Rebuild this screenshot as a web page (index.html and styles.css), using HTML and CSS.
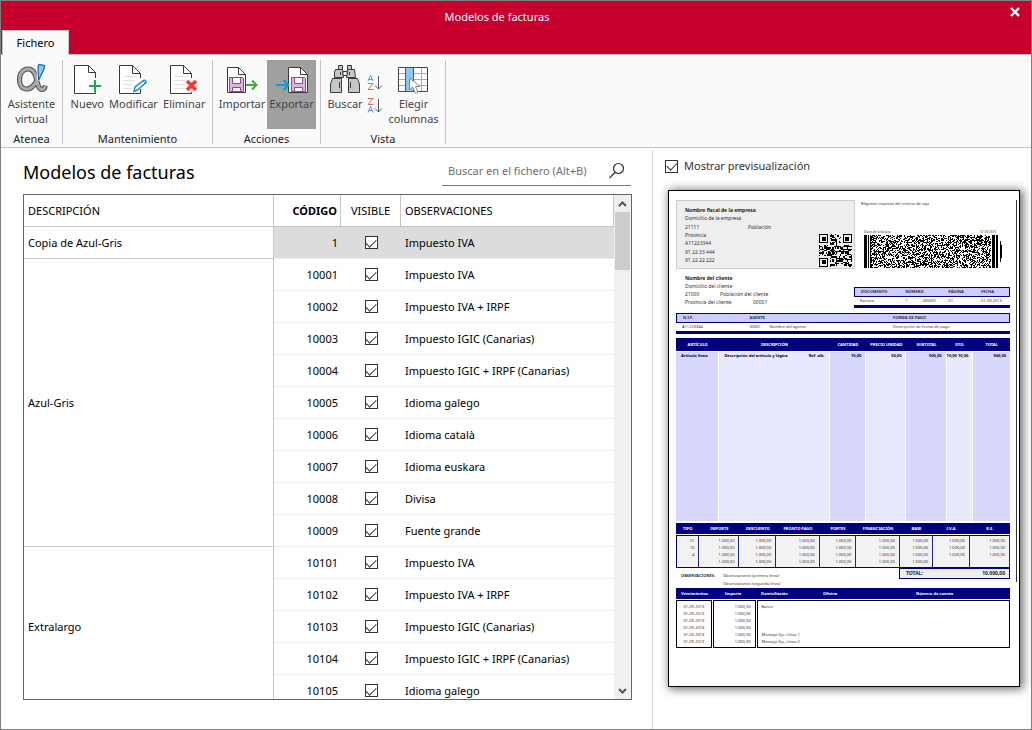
FILE: index.html
```html
<!DOCTYPE html>
<html lang="es">
<head>
<meta charset="utf-8">
<title>Modelos de facturas</title>
<link rel="stylesheet" href="styles.css">
</head>
<body>
<div class="window">
  <header class="titlebar">
    <div class="title">Modelos de facturas</div>
    <button class="close" aria-label="Cerrar"><svg width="10" height="10" viewBox="0 0 10 10"><path d="M1 1L9 9M9 1L1 9" stroke="#fff" stroke-width="2.4"/></svg></button>
    <button class="tab">Fichero</button>
  </header>

  <nav class="ribbon">
    <section class="group g-atenea">
      <div class="tools">
        <button class="tool"><svg width="32" height="32" viewBox="0 0 32 32"><path d="M25 5C22 15 19 26 10.500 26C6 26 3.500 22 3.500 16.500C3.500 10.500 7 6 12 6C19 6 20 14 21.500 20C22.500 24.500 24 26.500 26 26.500C28 26.500 28.800 25 29.200 22.500" fill="none" stroke="#555" stroke-width="5.200"/><path d="M24.500 6C22 15 19 26 10.500 26C6 26 3.500 22 3.500 16.500C3.500 10.500 7 6 12 6C19 6 20 14 21.500 20C22.500 24.500 24 26.500 26 26.500C28 26.500 28.800 25 29.200 23" fill="none" stroke="#aaa" stroke-width="3"/><path d="M22 3.500L23 1.500L28.500 2.500L28 6L22.500 17.500Z" fill="#8fc6ee" stroke="#fafafa" stroke-width="3"/><path d="M22 3.500L23 1.500L28.500 2.500L28 6L22.500 17.500Z" fill="#8fc6ee" stroke="#1467ad" stroke-width="1.200"/></svg><span>Asistente<br>virtual</span></button>
      </div>
      <h2>Atenea</h2>
    </section>
    <section class="group g-mant">
      <div class="tools">
        <button class="tool"><svg width="32" height="32" viewBox="0 0 32 32"><path d="M24.500 16V9.500L17.500 2.500H3.500V30.500H24.500V30" fill="#fff"/><path d="M24.500 15V9.500L17.500 2.500H3.500V30.500H24.500V28.500M17.500 2.500V9.500H24.500" fill="none" stroke="#3a3a3a"/><path d="M24 17V29M18 23H30" stroke="#1aab4f" stroke-width="2"/></svg><span>Nuevo</span></button>
        <button class="tool"><svg width="32" height="32" viewBox="0 0 32 32"><path d="M23.500 16V9.500L15.500 2.500H2.500V30.500H23.500" fill="#fff"/><path d="M6 13.500H20M6 17.500H18M6 21.500H16M6 25.500H15" stroke="#e2e2e2"/><path d="M23.500 15V10.500L15.500 2.500H2.500V30.500H23.500V26M15.500 2.500V10.500H23.500" fill="none" stroke="#3a3a3a"/><path d="M17 28.500L18 24L26.500 17.500Q29 16.500 29 19.500L20.500 27Z" fill="#fff" stroke="#2a8bc8" stroke-width="1.500"/><path d="M26 18L28.500 20.500" stroke="#2a8bc8"/></svg><span>Modificar</span></button>
        <button class="tool"><svg width="32" height="32" viewBox="0 0 32 32"><path d="M23.500 16V9.500L15.500 2.500H2.500V30.500H23.500" fill="#fff"/><path d="M6 13.500H20M6 17.500H18M6 21.500H17M6 25.500H17" stroke="#e2e2e2"/><path d="M23.500 15V10.500L15.500 2.500H2.500V30.500H23.500V29M15.500 2.500V10.500H23.500" fill="none" stroke="#3a3a3a"/><path d="M19 18L28 27M28 18L19 27" stroke="#ee3a38" stroke-width="3.400"/></svg><span>Eliminar</span></button>
      </div>
      <h2>Mantenimiento</h2>
    </section>
    <section class="group g-acc">
      <div class="tools">
        <button class="tool"><svg width="32" height="32" viewBox="0 0 32 32"><path d="M19.500 29.500H1.500V4.500H12.500L19.500 11.500Z" fill="#fff" stroke="#3a3a3a"/><path d="M12.500 4.500V11.500H19.500" fill="none" stroke="#3a3a3a"/><path d="M3.500 14.500H16.500L17.500 15.500V28.500H3.500Z" fill="#dcb4dc" stroke="#9a449c"/><path d="M6.500 14.500H14.500V20.500H6.500ZM6.500 24.500H14.500V28.500H6.500Z" fill="#fff" stroke="#9a449c"/><path d="M20 22H30M26 17.500L30.500 22L26 26.500" fill="none" stroke="#45a92c" stroke-width="2"/></svg><span>Importar</span></button>
        <button class="tool active"><svg width="32" height="32" viewBox="0 0 32 32"><path d="M31.500 29.500H12.500V4.500H24.500L31.500 11.500Z" fill="#fff" stroke="#3a3a3a"/><path d="M24.500 4.500V11.500H31.500" fill="none" stroke="#3a3a3a"/><path d="M15.500 14.500H28.500L29.500 15.500V28.500H15.500Z" fill="#dcb4dc" stroke="#9a449c"/><path d="M18.500 14.500H26.500V20.500H18.500ZM18.500 24.500H26.500V28.500H18.500Z" fill="#fff" stroke="#9a449c"/><path d="M0 22H12M7.500 17L12.500 22L7.500 27" fill="none" stroke="#0b98dc" stroke-width="2"/></svg><span>Exportar</span></button>
      </div>
      <h2>Acciones</h2>
    </section>
    <section class="group g-vista">
      <div class="tools">
        <button class="tool"><svg width="32" height="32" viewBox="0 0 32 32"><g fill="#c6c6c4" stroke="#3a3a3a"><path d="M9.500 2.500H13.500V6.500H9.500ZM18.500 2.500H22.500V6.500H18.500Z"/><path d="M6.500 6.500H13.500L14.500 14.500H5.500V9ZM18.500 6.500H25.500L26.500 14.500H17.500Z"/><path d="M14 8.500H18V12.500H14Z" fill="#fff"/><path d="M3.500 15.500H12.500V29.500H1.500V21ZM19.500 15.500H28.500L30.500 21V29.500H19.500Z"/></g><path d="M10.500 19V25M21.500 19V25M11.500 9V12M20.500 9V12" stroke="#3a3a3a"/></svg><span>Buscar</span></button>
        <div class="sorts">
          <button aria-label="Orden ascendente"><svg width="16" height="18" viewBox="0 0 16 18"><path d="M1 7L3.500 1.500L6 7M2 5.500H5" fill="none" stroke="#3d9bdc"/><path d="M1 9.500H6L1 15.500H6.500" fill="none" stroke="#e66767"/><path d="M11.500 2V15M8 11.500L11.500 15L15 11.500" fill="none" stroke="#555"/></svg></button>
          <button aria-label="Orden descendente"><svg width="16" height="18" viewBox="0 0 16 18"><path d="M1 1.500H6L1 7.500H6.500" fill="none" stroke="#e66767"/><path d="M1 15.500L3.500 9.500L6 15.500M2 13.500H5" fill="none" stroke="#3d9bdc"/><path d="M11.500 2V15M8 11.500L11.500 15L15 11.500" fill="none" stroke="#555"/></svg></button>
        </div>
        <button class="tool"><svg width="32" height="32" viewBox="0 0 32 32"><path d="M.5 4.500H29.500V28.500H.5Z" fill="#fff"/><path d="M0 10.500H30M0 16.500H30M0 22.500H30M23.500 4V28" stroke="#aaa"/><path d="M.5 4.500H29.500V28.500H.5Z" fill="none" stroke="#444"/><path d="M7.500 4.500H15.500V28.500H7.500Z" fill="#8fc6ee" stroke="#1467ad"/><path d="M11.500 15V27L14.500 24L17.500 30.500L20 29L17.500 23.500H22Z" fill="#fff" stroke="#888"/></svg><span>Elegir<br>columnas</span></button>
      </div>
      <h2>Vista</h2>
    </section>
  </nav>

  <main class="content">
    <section class="left">
      <div class="heading">
        <h1>Modelos de facturas</h1>
        <label class="search"><input type="text" placeholder="Buscar en el fichero (Alt+B)" aria-label="Buscar en el fichero"><svg width="18" height="18" viewBox="0 0 18 18"><circle cx="10.500" cy="6.500" r="5" fill="none" stroke="#333" stroke-width="1.200"/><path d="M7 10.500L1.500 16" stroke="#333" stroke-width="1.300"/></svg></label>
      </div>
      <div class="listbox">
        <div class="rows">
        <table class="list">
          <colgroup><col class="c-desc"><col class="c-cod"><col class="c-vis"><col></colgroup>
          <thead><tr><th>DESCRIPCIÓN</th><th class="num">CÓDIGO</th><th class="mid">VISIBLE</th><th>OBSERVACIONES</th></tr></thead>
          <tbody>
            <tr class="sel"><td class="desc">Copia de Azul-Gris</td><td class="num">1</td><td class="mid"><input type="checkbox" checked aria-label="Visible 1"></td><td>Impuesto IVA</td></tr>
            <tr><td class="desc" rowspan="9">Azul-Gris</td><td class="num">10001</td><td class="mid"><input type="checkbox" checked aria-label="Visible 10001"></td><td>Impuesto IVA</td></tr>
            <tr><td class="num">10002</td><td class="mid"><input type="checkbox" checked aria-label="Visible 10002"></td><td>Impuesto IVA + IRPF</td></tr>
            <tr><td class="num">10003</td><td class="mid"><input type="checkbox" checked aria-label="Visible 10003"></td><td>Impuesto IGIC (Canarias)</td></tr>
            <tr><td class="num">10004</td><td class="mid"><input type="checkbox" checked aria-label="Visible 10004"></td><td>Impuesto IGIC + IRPF (Canarias)</td></tr>
            <tr><td class="num">10005</td><td class="mid"><input type="checkbox" checked aria-label="Visible 10005"></td><td>Idioma galego</td></tr>
            <tr><td class="num">10006</td><td class="mid"><input type="checkbox" checked aria-label="Visible 10006"></td><td>Idioma català</td></tr>
            <tr><td class="num">10007</td><td class="mid"><input type="checkbox" checked aria-label="Visible 10007"></td><td>Idioma euskara</td></tr>
            <tr><td class="num">10008</td><td class="mid"><input type="checkbox" checked aria-label="Visible 10008"></td><td>Divisa</td></tr>
            <tr><td class="num">10009</td><td class="mid"><input type="checkbox" checked aria-label="Visible 10009"></td><td>Fuente grande</td></tr>
            <tr><td class="desc" rowspan="5">Extralargo</td><td class="num">10101</td><td class="mid"><input type="checkbox" checked aria-label="Visible 10101"></td><td>Impuesto IVA</td></tr>
            <tr><td class="num">10102</td><td class="mid"><input type="checkbox" checked aria-label="Visible 10102"></td><td>Impuesto IVA + IRPF</td></tr>
            <tr><td class="num">10103</td><td class="mid"><input type="checkbox" checked aria-label="Visible 10103"></td><td>Impuesto IGIC (Canarias)</td></tr>
            <tr><td class="num">10104</td><td class="mid"><input type="checkbox" checked aria-label="Visible 10104"></td><td>Impuesto IGIC + IRPF (Canarias)</td></tr>
            <tr><td class="num">10105</td><td class="mid"><input type="checkbox" checked aria-label="Visible 10105"></td><td>Idioma galego</td></tr>
          </tbody>
        </table>
        </div>
        <div class="scroll">
          <button aria-label="Subir"><svg width="9" height="6" viewBox="0 0 9 6"><path d="M1 5L4.500 1.500L8 5" fill="none" stroke="#555" stroke-width="2"/></svg></button>
          <div class="thumb"></div>
          <button class="down" aria-label="Bajar"><svg width="9" height="6" viewBox="0 0 9 6"><path d="M1 1L4.500 4.500L8 1" fill="none" stroke="#555" stroke-width="2"/></svg></button>
        </div>
      </div>
    </section>

    <aside class="right">
      <label class="show"><input type="checkbox" checked>Mostrar previsualización</label>
      <article class="sheet">
        <div class="top">
          <div class="parties">
            <div class="company">
              <div class="lines">
                <p><b>Nombre fiscal de la empresa</b></p>
                <p>Domicilio de la empresa</p>
                <p class="pair wide"><span>21111</span><span>Población</span></p>
                <p>Provincia</p>
                <p>A11223344</p>
                <p>91 22 33 444</p>
                <p>91 22 22 222</p>
              </div>
              <svg class="qr" width="33" height="33" viewBox="0 0 25 25" shape-rendering="crispEdges"><path id="qr"/></svg>
            </div>
            <div class="client">
              <p><b>Nombre del cliente</b></p>
              <p>Domicilio del cliente</p>
              <p class="pair"><span>21000</span><span>Población del cliente</span></p>
              <p class="pair prov"><span>Provincia del cliente</span><span>00001</span></p>
            </div>
          </div>
          <div class="codes">
            <p class="regime">Régimen especial del criterio de caja</p>
            <div class="tiny"><span>Datos de la factura</span><span>01-09-2013</span></div>
            <svg class="pdf" width="140" height="33" viewBox="0 0 140 33" shape-rendering="crispEdges"><path id="pdf"/></svg>
            <table class="strip doc">
              <colgroup><col class="d1"><col class="d2"><col class="d3"><col class="d4"><col></colgroup>
              <thead><tr><th>DOCUMENTO</th><th colspan="2">NÚMERO</th><th class="pl">PÁGINA</th><th class="pl">FECHA</th></tr></thead>
              <tbody><tr><td>Factura</td><td>1</td><td>000001</td><td class="pl">01</td><td class="pl">01-09-2013</td></tr></tbody>
            </table>
          </div>
        </div>
        <table class="strip nif">
          <colgroup><col class="n1"><col class="n2"><col class="n3"><col></colgroup>
          <thead><tr><th>N.I.F.</th><th colspan="2">AGENTE</th><th>FORMA DE PAGO</th></tr></thead>
          <tbody><tr><td>A11223344</td><td>00001</td><td>Nombre del agente</td><td>Descripción de forma de pago</td></tr></tbody>
        </table>
        <table class="items">
          <colgroup><col class="i1"><col class="i2"><col class="i3"><col class="i4"><col class="i5"><col class="i6"><col></colgroup>
          <thead><tr><th>ARTÍCULO</th><th>DESCRIPCIÓN</th><th>CANTIDAD</th><th>PRECIO UNIDAD</th><th>SUBTOTAL</th><th>DTO.</th><th>TOTAL</th></tr></thead>
          <tbody><tr><td class="txt">Artículo línea</td><td class="txt"><span class="split"><span>Descripción del artículo y lógica</span><span>Ref. alb.</span></span></td><td>10,00</td><td>50,00</td><td>500,00</td><td>10,00 10,00</td><td>500,00</td></tr></tbody>
        </table>
        <table class="taxes">
          <colgroup><col class="t1"><col class="t2"><col class="t3"><col class="t4"><col class="t3"><col class="t4"><col class="t7"><col class="t3"><col></colgroup>
          <thead><tr><th>TIPO</th><th>IMPORTE</th><th>DESCUENTO</th><th>PRONTO PAGO</th><th>PORTES</th><th>FINANCIACIÓN</th><th>BASE</th><th>I.V.A.</th><th>R.E.</th></tr></thead>
          <tbody>
            <tr><td>21</td><td>1.000,00</td><td>1.000,00</td><td>1.000,00</td><td>1.000,00</td><td>1.000,00</td><td>1.000,00</td><td>1.000,00</td><td>1.000,00</td></tr>
            <tr><td>10</td><td>1.000,00</td><td>1.000,00</td><td>1.000,00</td><td>1.000,00</td><td>1.000,00</td><td>1.000,00</td><td>1.000,00</td><td>1.000,00</td></tr>
            <tr><td>4</td><td>1.000,00</td><td>1.000,00</td><td>1.000,00</td><td>1.000,00</td><td>1.000,00</td><td>1.000,00</td><td>1.000,00</td><td>1.000,00</td></tr>
            <tr><td></td><td>1.000,00</td><td>1.000,00</td><td>1.000,00</td><td>1.000,00</td><td>1.000,00</td><td>1.000,00</td><td></td><td></td></tr>
          </tbody>
        </table>
        <div class="sum">
          <b class="obs-label">OBSERVACIONES:</b>
          <div class="obs"><p>Observaciones (primera línea)</p><p>Observaciones (segunda línea)</p></div>
          <div class="total"><b>TOTAL:</b><b>10.000,00</b></div>
        </div>
        <div class="due-head"><span>Vencimientos</span><span>Importe</span><span>Domiciliación</span><span>Oficina</span><span>Número de cuenta</span></div>
        <div class="due">
          <div class="dates"><p>01-09-2013</p><p>01-09-2013</p><p>01-09-2013</p><p>01-09-2013</p><p>01-09-2013</p><p>01-09-2013</p></div>
          <div class="amounts"><p>1.000,00</p><p>1.000,00</p><p>1.000,00</p><p>1.000,00</p><p>1.000,00</p><p>1.000,00</p></div>
          <div class="bank"><p>Banco</p><div><p>Mensaje fijo. Línea 1</p><p>Mensaje fijo. Línea 2</p></div></div>
        </div>
      </article>
    </aside>
  </main>
</div>
<script src="codes.js"></script>
</body>
</html>
```
FILE: codes.js
```js
// Sample QR and PDF417 codes of the invoice preview.
let seed = 7;
function bit() {
  seed = (seed * 1103515245 + 12345) % 2147483648;
  return seed / 2147483648 > 0.5;
}
function cell(x, y, w, h) {
  return `M${x} ${y}h${w}v${h}h${-w}z`;
}

const finders = [[0, 0], [18, 0], [0, 18]];
let qr = '';
for (let y = 0; y < 25; y++) {
  for (let x = 0; x < 25; x++) {
    const f = finders.find(([a, b]) => x >= a - 1 && x < a + 8 && y >= b - 1 && y < b + 8);
    let on = bit();
    if (f) {
      const d = Math.max(Math.abs(x - f[0] - 3), Math.abs(y - f[1] - 3));
      on = d === 3 || d < 2;
    }
    if (on) qr += cell(x, y, 1, 1);
  }
}
document.getElementById('qr').setAttribute('d', qr);

let pdf = cell(0, 0, 3, 33) + cell(4, 0, 1, 33) + cell(6, 0, 1, 33) +
  cell(128, 0, 3, 33) + cell(132, 0, 2, 33) + cell(136, 6, 1, 21) + cell(137, 10, 1, 13);
for (let y = 0; y < 33; y++) {
  for (let x = 7; x < 127; x++) {
    if (bit()) pdf += cell(x, y, 1, 1);
  }
}
document.getElementById('pdf').setAttribute('d', pdf);
```
FILE: styles.css
```css
* { box-sizing: border-box; }
body { margin: 0; font: 11px/16px "Noto Sans", "Open Sans", sans-serif; color: #111; background: #fff; }
button { font: inherit; color: inherit; border: 0; background: none; padding: 0; }
h1, h2, p { margin: 0; font-weight: 400; }
svg { display: block; }

.window { height: 100vh; display: flex; flex-direction: column; border: 1px solid #7f7f7f; }

.titlebar { height: 53px; flex: none; background: #c8002d; display: grid; grid-template-columns: 1fr auto; grid-template-rows: 29px 24px; }
.title { color: #fff; text-align: center; padding: 8px 0 0 0; grid-column: 1 / -1; grid-row: 1; padding-right: 38px; }
.close { width: 32px; height: 22px; display: flex; align-items: center; justify-content: center; grid-column: 2; grid-row: 1; }
.tab { justify-self: start; grid-column: 1; width: 67px; height: 25px; margin-left: 1px; background: #fafafa; border: 1px solid #c4c4c4; border-bottom: 0; z-index: 1; color: #000; }

.ribbon { flex: none; height: 94px; background: #fafafa; border-top: 1px solid #c4c4c4; border-bottom: 1px solid #c4c4c4; display: flex; padding: 5px 0 3px; color: #444; }
.group { display: flex; flex-direction: column; justify-content: space-between; border-right: 1px solid #c4c4c4; }
.group h2 { font-size: 11px; line-height: 16px; text-align: center; color: #222; margin-bottom: -3px; }
.g-atenea { width: 62px; }
.g-mant { width: 150px; }
.g-acc { width: 108px; }
.g-vista { width: 125px; }
.tools { display: flex; justify-content: center; }
.g-mant .tools { padding: 0 4px 0 5px; }
.g-acc .tools { padding-left: 4px; }
.g-vista .tools { padding: 0 5px; }
.tool { height: 69px; padding: 3px 0 0; line-height: 15px; display: flex; flex-direction: column; align-items: center; flex: 1 1 auto; white-space: nowrap; }
.tool span { padding-top: 1px; }
.tool.active { background: #a0a0a0; flex: none; width: 49px; margin-right: 4px; }
.sorts { display: flex; flex-direction: column; gap: 5px; padding: 14px 4px 0 3px; }

.content { flex: 1; min-height: 0; display: grid; grid-template-columns: 652fr 378fr; padding-top: 2px; }
.left { min-height: 0; display: flex; flex-direction: column; padding: 7px 20px 29px 22px; border-right: 1px solid #d4d4d4; }
.heading { display: flex; justify-content: space-between; align-items: center; height: 29px; margin-bottom: 8px; }
h1 { font-size: 18px; line-height: 28px; color: #000; }
.search { width: 189px; height: 29px; border-bottom: 1px solid #777; display: flex; align-items: center; padding: 0 5px; margin-right: 1px; }
.search input { flex: 1; min-width: 0; border: 0; outline: 0; padding: 0 1px; font: inherit; background: none; }
.search input::placeholder { color: #6e6e6e; opacity: 1; }

.listbox { flex: 1; min-height: 0; border: 1px solid #666; display: flex; }
.rows { flex: 1; overflow: hidden; }
.list { width: 100%; table-layout: fixed; border-collapse: separate; border-spacing: 0; }
.c-desc { width: 250px; }
.c-cod { width: 67px; }
.c-vis { width: 60px; }
.list th, .list td { height: 32px; padding: 0 4px; text-align: left; font-weight: 400; color: #000; }
.list th { border-right: 1px solid #c6c6c6; border-bottom: 1px solid #c6c6c6; }
.list td { border-bottom: 1px solid #ececec; }
.list td.desc { background: #fff; border-right: 1px solid #c6c6c6; border-bottom-color: #c6c6c6; }
.list .sel td:not(.desc) { background: #dcdcdc; }
.list .num { text-align: right; padding-right: 3px; }
.list th.num { font-weight: 700; }
.list .mid { text-align: center; padding: 0; }
.list .mid input { display: grid; margin: 0 auto; }

input[type=checkbox] { appearance: none; width: 13px; height: 13px; margin: 0; border: 1px solid #333; background: #fff; display: inline-grid; place-items: center; }
input[type=checkbox]:checked::before { content: ""; width: 9px; height: 5px; border: solid #333; border-width: 0 0 1px 1px; transform: translateY(-1px) rotate(-45deg); }

.scroll { width: 17px; background: #f0f0f0; display: flex; flex-direction: column; }
.scroll button { height: 17px; display: flex; align-items: center; justify-content: center; }
.scroll .down { margin-top: auto; }
.thumb { height: 58px; background: #cdcdcd; margin: 0 1px; }

.right { padding: 8px 11px 0 15px; }
.show { display: flex; align-items: center; gap: 6px; height: 16px; color: #333; margin: 0 0 16px -3px; }

.sheet { position: relative; height: 497px; border: 1px solid #000; background: #fff; box-shadow: 2px 1px 9px 1px rgba(0, 0, 0, .6); padding: 9px 9px 0 7px; font-size: 5px; line-height: 8px; color: #333; white-space: nowrap; }
.sheet::after { content: ""; position: absolute; right: 2px; top: 9px; height: 382px; border-right: 1px solid #333; }
.sheet table { width: 100%; border-collapse: separate; border-spacing: 0; table-layout: fixed; }
.sheet th, .sheet td { padding: 0; text-align: left; overflow: visible; }
.top { display: grid; grid-template-columns: 178fr 156fr; }
.company { height: 69px; margin-right: -1px; background: #eee; border: 1px solid #ccc; display: flex; justify-content: space-between; align-items: flex-end; padding: 5px 2px 1px 8px; }
.lines { align-self: flex-start; height: 58px; display: flex; flex-direction: column; justify-content: space-between; }
.company b, .client b { color: #222; }
.pair { display: grid; grid-template-columns: 35px auto; }
.pair.wide { grid-template-columns: 63px auto; }
.pair.prov { grid-template-columns: 68px auto; }
.client { padding: 5px 0 0 9px; }
.regime { padding-left: 7px; font-size: 4px; line-height: 8px; }
.tiny { display: flex; justify-content: space-between; padding: 22px 14px 0 10px; font-size: 3px; line-height: 5px; }
.pdf { margin-left: 10px; }
.strip th { height: 10px; font-size: 4px; line-height: 8px; background: #ccccff; border: solid #000080; border-width: 1px 0; }
.strip th:first-child { border-left-width: 1px; }
.strip th:last-child { border-right-width: 1px; }
.strip td { height: 8px; line-height: 8px; font-size: 4px; }
.strip th:first-child, .strip td:first-child { padding-left: 6px; }
.strip { border-bottom: 3px solid #000080; }
.doc { margin-top: 19px; }
.doc .pl { padding-left: 7px; }
.d1 { width: 33%; } .d2 { width: 11%; } .d3 { width: 12%; } .d4 { width: 21%; }
.nif { margin-top: 5px; }
.n1 { width: 22%; } .n2 { width: 6%; } .n3 { width: 37%; }

.items { margin-top: 4px; }
.sheet .items th, .sheet .taxes th { background: #000080; color: #fff; font-size: 4px; text-align: center; }
.sheet .items th { height: 14px; border-bottom: 1px solid #fff; }
.items td { height: 169px; vertical-align: top; border-right: 1px solid #fff; background: #e8e8ff; color: #000; font-size: 4px; font-weight: 700; line-height: 7px; }
.items td:nth-child(odd) { background: #d8d8ff; }
.items td:last-child { border-right: 0; }
.sheet .items td { text-align: right; padding-right: 4px; }
.sheet .items .txt { text-align: left; padding-left: 5px; }
.split { display: flex; justify-content: space-between; }
.i1 { width: 13%; } .i2 { width: 33%; } .i3 { width: 11%; } .i4 { width: 12%; } .i5 { width: 12%; } .i6 { width: 8%; }

.taxes { margin-top: 2px; }
.sheet .taxes th { height: 12px; border-bottom: 1px solid #fff; }
.sheet .taxes td { height: 7px; line-height: 7px; font-size: 4px; text-align: right; padding-right: 4px; background: #f2f2f2; border-right: 1px solid #202090; }
.taxes td:first-child { border-left: 1px solid #000080; }
.taxes tbody tr:first-child td { border-top: 1px solid #000080; height: 9px; padding-top: 1px; }
.taxes tbody tr:last-child td { border-bottom: 1px solid #000080; height: 10px; padding-bottom: 2px; }
.t1 { width: 7%; } .t2 { width: 12%; } .t3 { width: 11%; } .t4 { width: 13%; } .t7 { width: 10%; }

.sum { display: grid; grid-template-columns: 42fr 181fr 111fr; height: 20px; font-size: 4px; }
.obs-label { padding: 4px 0 0 5px; }
.obs { padding: 4px 0 0 5px; }
.total { height: 11px; border: 1px solid #000080; background: #eee; display: flex; justify-content: space-between; padding: 0 4px 0 6px; line-height: 8px; font-size: 5px; color: #222; }
.due-head { display: grid; grid-template-columns: 44fr 36fr 62fr 93fr 94fr; height: 11px; background: #000080; color: #fff; font-size: 4px; font-weight: 700; line-height: 11px; padding-left: 5px; margin-bottom: 1px; }
.due { display: grid; grid-template-columns: 36fr 43fr 255fr; gap: 1px; height: 48px; font-size: 4px; line-height: 7px; }
.due > div { border: 1px solid #000; padding: 2px 4px; text-align: right; }
.due .dates { text-align: center; }
.due .bank { text-align: left; display: flex; flex-direction: column; justify-content: space-between; }
```
